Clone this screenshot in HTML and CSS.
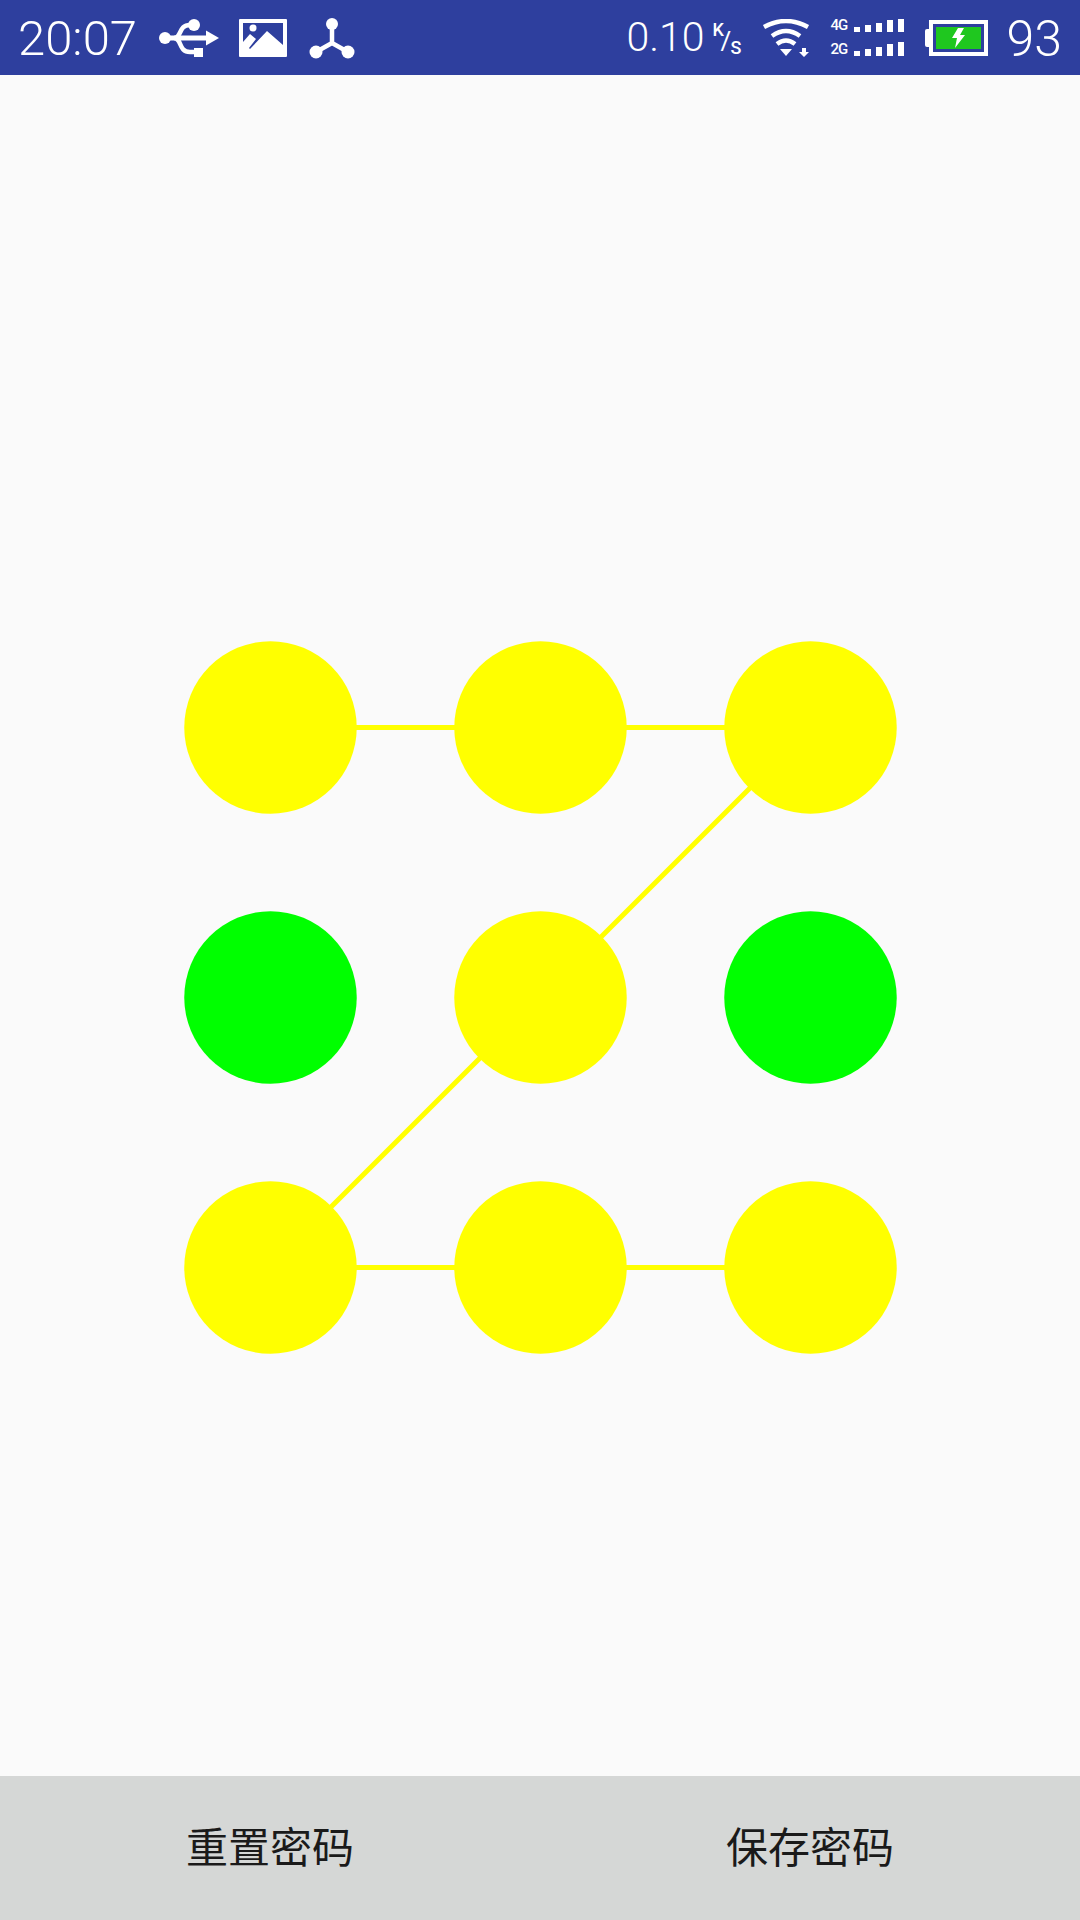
FILE: index.html
```html
<!DOCTYPE html>
<html lang="en">
<head>
    <meta charset="UTF-8">
    <meta name="viewport" content="width=device-width, initial-scale=1.0">
    <title>Gesture Password</title>
    <link rel="stylesheet" href="styles.css">
</head>
<body>
    <div class="app">
        <!-- Status bar -->
        <header class="status-bar">
            <span class="time">20:07</span>
            <svg class="icon-usb" width="60" height="38" viewBox="0 0 60 38">
                <circle cx="6" cy="19" r="6" fill="#fff"/>
                <path d="M6 19H50" stroke="#fff" stroke-width="5" fill="none"/>
                <path d="M47 11.500L60 19L47 26.500Z" fill="#fff"/>
                <path d="M15 19C23 19 19 6 31 6H35" stroke="#fff" stroke-width="4.500" fill="none"/>
                <circle cx="35" cy="6" r="6" fill="#fff"/>
                <path d="M15 19C23 19 19 33 31 33H36" stroke="#fff" stroke-width="4.500" fill="none"/>
                <rect x="35" y="29" width="9" height="9" fill="#fff"/>
            </svg>
            <svg class="icon-picture" width="48" height="38" viewBox="0 0 48 38">
                <path fill-rule="evenodd" fill="#fff" d="M1 0H47Q48 0 48 1V37Q48 38 47 38H1Q0 38 0 37V1Q0 0 1 0ZM4 4V23L11 15L17 20L10 29L11 30L28 12L44 26V4Z"/>
                <circle cx="14" cy="9" r="3.500" fill="#fff"/>
            </svg>
            <svg class="icon-share" width="46" height="42" viewBox="0 0 46 42">
                <path d="M23 7V26M23 26L7 35M23 26L39 35" stroke="#fff" stroke-width="4.500" fill="none"/>
                <circle cx="23" cy="7" r="6" fill="#fff"/>
                <circle cx="7" cy="35" r="6.500" fill="#fff"/>
                <circle cx="39" cy="35" r="6.500" fill="#fff"/>
            </svg>
            <span class="spacer"></span>
            <span class="speed">0.10</span>
            <span class="speed-unit"><i>K</i><b>/</b><i>S</i></span>
            <svg class="icon-wifi" width="48" height="38" viewBox="0 0 48 38">
                <path d="M2 8Q24 -4 46 8M10 17Q24 7 38 17M15 25Q24 18 33 25" stroke="#fff" stroke-width="4.500" fill="none"/>
                <path d="M18 30H30L24 37Z" fill="#fff"/>
                <path d="M40 29H44V33H47L42 38L37 33H40Z" fill="#fff"/>
            </svg>
            <div class="signal">
                <div class="signal-row top">
                    <span class="signal-label">4G</span>
                    <span class="bar b1"></span><span class="bar b2"></span><span class="bar b3"></span><span class="bar b4"></span><span class="bar b5"></span>
                </div>
                <div class="signal-row">
                    <span class="signal-label">2G</span>
                    <span class="bar b1"></span><span class="bar b2"></span><span class="bar b3"></span><span class="bar b4"></span><span class="bar b5"></span>
                </div>
            </div>
            <div class="battery">
                <span class="battery-tip"></span>
                <div class="battery-body">
                    <div class="battery-level">
                        <svg width="14" height="20" viewBox="0 0 14 20"><path d="M7 0H13L9 7H14L4 20L6 10H1Z" fill="#fff"/></svg>
                    </div>
                </div>
            </div>
            <span class="level">93</span>
        </header>

        <!-- Pattern -->
        <main class="content">
            <svg class="pattern" width="713" height="713" viewBox="0 0 713 713">
                <polyline class="pattern-line" points="86.500,86.500 356.500,86.500 626.500,86.500 356.500,356.500 86.500,626.500 356.500,626.500 626.500,626.500"/>
                <circle class="node on" cx="86.500" cy="86.500" r="86.250"/>
                <circle class="node on" cx="356.500" cy="86.500" r="86.250"/>
                <circle class="node on" cx="626.500" cy="86.500" r="86.250"/>
                <circle class="node off" cx="86.500" cy="356.500" r="86.250"/>
                <circle class="node on" cx="356.500" cy="356.500" r="86.250"/>
                <circle class="node off" cx="626.500" cy="356.500" r="86.250"/>
                <circle class="node on" cx="86.500" cy="626.500" r="86.250"/>
                <circle class="node on" cx="356.500" cy="626.500" r="86.250"/>
                <circle class="node on" cx="626.500" cy="626.500" r="86.250"/>
            </svg>
        </main>

        <!-- Bottom buttons -->
        <footer class="actions">
            <button class="action">重置密码</button>
            <button class="action">保存密码</button>
        </footer>
    </div>
</body>
</html>
```

FILE: styles.css
```css
/* Global Reset */
* {
    margin: 0;
    padding: 0;
    box-sizing: border-box;
}

body {
    font-family: Roboto, "Noto Sans CJK SC", sans-serif;
    background-color: #fafafa;
}

.app {
    width: 1080px;
    height: 1920px;
    display: flex;
    flex-direction: column;
}

/* Status Bar */
.status-bar {
    height: 75px;
    flex: none;
    display: flex;
    align-items: center;
    padding: 0 18px 0 18px;
    background-color: #2e3f9e;
    color: #fff;
    font-weight: 300;
}

.status-bar svg {
    flex: none;
    display: block;
}

.time {
    padding-top: 3px;
    font-size: 49px;
    line-height: 72px;
}

.icon-usb {
    margin-left: 22px;
}

.icon-picture {
    margin-left: 20px;
}

.icon-share {
    margin-left: 22px;
}

.spacer {
    flex: 1;
}

.speed {
    font-size: 41px;
    line-height: 75px;
}

.speed-unit {
    position: relative;
    width: 29px;
    height: 40px;
    margin-left: 8px;
    font-size: 18px;
    font-weight: 500;
}

.speed-unit i {
    position: absolute;
    font-style: normal;
    line-height: 18px;
    left: 0;
    top: 3px;
}

.speed-unit b {
    position: absolute;
    font-weight: 400;
    font-size: 26px;
    line-height: 26px;
    left: 8px;
    top: 10px;
}

.speed-unit i:last-child {
    left: 18px;
    top: 21px;
}

.icon-wifi {
    margin-left: 20px;
}

/* Signal Bars */
.signal {
    display: flex;
    flex-direction: column;
    gap: 10px;
    margin-left: 21px;
}

.signal-row {
    display: flex;
    align-items: flex-end;
    height: 14px;
    gap: 5px;
}

.signal-row.top {
    height: 13px;
}

.signal-label {
    width: 16px;
    margin-right: 2px;
    font-size: 15px;
    font-weight: 500;
    letter-spacing: -1px;
    line-height: 13px;
    align-self: center;
}

.bar {
    width: 6px;
    background-color: #fff;
}

.b1 { height: 5px; }
.b2 { height: 7px; }
.b3 { height: 9px; }
.b4 { height: 12px; }
.b5 { height: 100%; }

/* Battery */
.battery {
    display: flex;
    align-items: center;
    margin-left: 21px;
    padding-top: 1px;
}

.battery-tip {
    width: 4px;
    height: 18px;
    background-color: #fff;
    border-radius: 2px 0 0 2px;
}

.battery-body {
    width: 59px;
    height: 36px;
    padding: 3px;
    border: 4px solid #fff;
}

.battery-level {
    display: flex;
    align-items: center;
    justify-content: center;
    width: 100%;
    height: 100%;
    background-color: #1fc71f;
}

.level {
    margin-left: 19px;
    padding-top: 3px;
    font-size: 50px;
    line-height: 72px;
}

/* Pattern */
.content {
    flex: 1;
    padding-top: 566px;
}

.pattern {
    display: block;
    margin: 0 auto;
}

.pattern-line {
    fill: none;
    stroke: #ffff00;
    stroke-width: 5;
}

.node.on {
    fill: #ffff00;
}

.node.off {
    fill: #00ff00;
}

/* Bottom Buttons */
.actions {
    height: 144px;
    flex: none;
    display: grid;
    grid-template-columns: 1fr 1fr;
    background-color: #d5d7d6;
}

.action {
    padding-bottom: 7px;
    border: none;
    background: none;
    color: #1a1a1a;
    font-family: "Noto Sans CJK SC", sans-serif;
    font-size: 42px;
}
```
